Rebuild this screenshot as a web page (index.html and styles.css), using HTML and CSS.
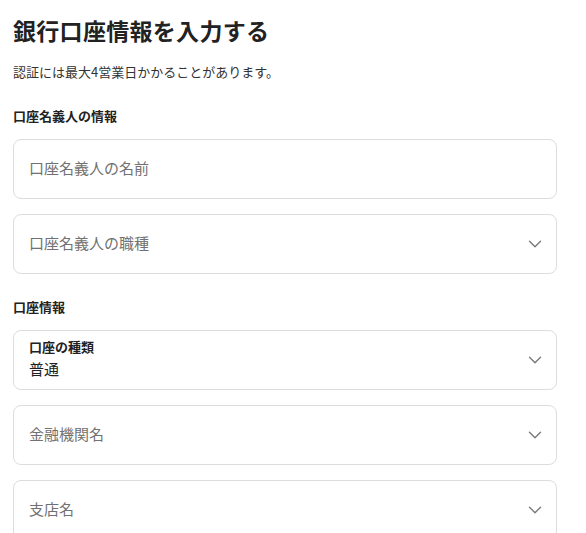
FILE: index.html
```html
<!DOCTYPE html>
<html lang="ja">
<head>
<meta charset="utf-8">
<link rel="stylesheet" href="styles.css">
</head>
<body>
<main class="page">
  <h1 class="title">銀行口座情報を入力する</h1>
  <p class="note">認証には最大4営業日かかることがあります。</p>

  <h2 class="section">口座名義人の情報</h2>
  <div class="fields">
    <div class="field"><span class="placeholder">口座名義人の名前</span></div>
    <div class="field select"><span class="placeholder">口座名義人の職種</span>
      <svg class="chev" viewBox="0 0 14 8" width="14" height="8"><path d="M1.5 1.2l5.5 5.5 5.5-5.5" fill="none" stroke="#7a7a7a" stroke-width="1.4" stroke-linecap="round" stroke-linejoin="round"/></svg>
    </div>
  </div>

  <h2 class="section section-2">口座情報</h2>
  <div class="fields">
    <div class="field select filled">
      <div class="stack">
        <span class="label">口座の種類</span>
        <span class="value">普通</span>
      </div>
      <svg class="chev" viewBox="0 0 14 8" width="14" height="8"><path d="M1.5 1.2l5.5 5.5 5.5-5.5" fill="none" stroke="#7a7a7a" stroke-width="1.4" stroke-linecap="round" stroke-linejoin="round"/></svg>
    </div>
    <div class="field select"><span class="placeholder">金融機関名</span>
      <svg class="chev" viewBox="0 0 14 8" width="14" height="8"><path d="M1.5 1.2l5.5 5.5 5.5-5.5" fill="none" stroke="#7a7a7a" stroke-width="1.4" stroke-linecap="round" stroke-linejoin="round"/></svg>
    </div>
    <div class="field select"><span class="placeholder">支店名</span>
      <svg class="chev" viewBox="0 0 14 8" width="14" height="8"><path d="M1.5 1.2l5.5 5.5 5.5-5.5" fill="none" stroke="#7a7a7a" stroke-width="1.4" stroke-linecap="round" stroke-linejoin="round"/></svg>
    </div>
  </div>
</main>
</body>
</html>
```

FILE: styles.css
```css
html, body {
  margin: 0;
  padding: 0;
  background: #ffffff;
}
body {
  font-family: "Noto Sans CJK JP", "Noto Sans", sans-serif;
  color: #222222;
}
.page {
  width: 544px;
  margin-left: 13px;
  padding-top: 14px;
}
.title {
  margin: 0;
  font-size: 23px;
  line-height: 32px;
  font-weight: 700;
  letter-spacing: 0.3px;
  color: #222222;
}
.note {
  margin: 16px 0 0;
  font-size: 13px;
  line-height: 20px;
  color: #333333;
}
.section {
  margin: 24px 0 0;
  font-size: 13px;
  line-height: 20px;
  font-weight: 700;
  color: #222222;
}
.section-2 {
  margin-top: 23px;
}
.fields {
  display: flex;
  flex-direction: column;
  gap: 15px;
  margin-top: 13px;
}
.field {
  box-sizing: border-box;
  height: 60px;
  border: 1px solid #dddddd;
  border-radius: 8px;
  display: flex;
  align-items: center;
  justify-content: space-between;
  padding: 0 14px 0 15px;
}
.placeholder {
  font-size: 15px;
  line-height: 22px;
  padding-bottom: 3px;
  color: #717171;
}
.stack {
  display: flex;
  flex-direction: column;
  padding-bottom: 1px;
}
.label {
  font-size: 13px;
  line-height: 18px;
  font-weight: 700;
  color: #222222;
}
.value {
  font-size: 15px;
  line-height: 26px;
  color: #222222;
}
.chev {
  display: block;
}
```
